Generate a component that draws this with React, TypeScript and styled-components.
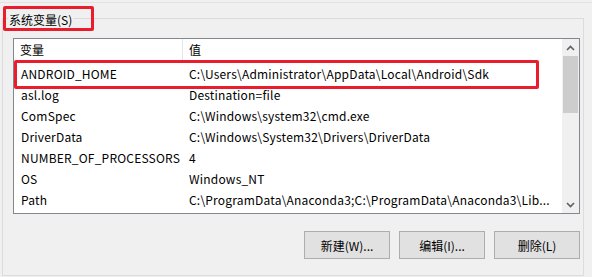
import React from "react";
import styled, { createGlobalStyle } from "styled-components";

const Global = createGlobalStyle`
  html, body { margin: 0; padding: 0; background: #f0f0f0; }
  body { font-family: "Noto Sans CJK SC", "Noto Sans", sans-serif; font-size: 12px; color: #000; }
`;

const Root = styled.div`
  width: 592px;
  height: 277px;
  box-sizing: border-box;
  padding-top: 2px;
  overflow: hidden;
`;

const TopLine = styled.div`
  border-top: 1px solid #e3e3e3;
  padding: 5px 8px 0 2px;
`;

const Group = styled.fieldset`
  position: relative;
  margin: 0;
  padding: 10px 3px 16px 10px;
  border: 1px solid #dcdcdc;
  min-width: 0;
  display: flex;
  flex-direction: column;
`;

const Legend = styled.legend`
  margin-left: -5px;
  padding: 0 1px;
  line-height: 20px;
  height: 20px;
  font-size: 12px;
  position: relative;
  top: 2px;
`;

const Mark = styled.div<{ $l: number; $t: number; $w: number; $h: number }>`
  position: absolute;
  left: ${(p) => p.$l}px;
  top: ${(p) => p.$t}px;
  width: ${(p) => p.$w}px;
  height: ${(p) => p.$h}px;
  box-sizing: border-box;
  border: 3px solid #ea1d2c;
  border-radius: 2px;
  pointer-events: none;
`;

const ListBox = styled.div`
  position: relative;
  height: 176px;
  box-sizing: border-box;
  border: 1px solid #828790;
  background: #fff;
  display: flex;
`;

const ListMain = styled.div`
  flex: 1;
  min-width: 0;
  display: flex;
  flex-direction: column;
  overflow: hidden;
`;

const Header = styled.div`
  display: flex;
  height: 21px;
  flex: none;
  margin-bottom: 3px;
`;

const HeadCell = styled.div<{ $w?: number; $sep?: boolean }>`
  ${(p) => (p.$w ? `width: ${p.$w}px; flex: none;` : "flex: 1;")}
  box-sizing: border-box;
  padding-left: 6px;
  line-height: 21px;
  border-right: ${(p) => (p.$sep ? "1px solid #e5e5e5" : "none")};
  white-space: nowrap;
`;

const Row = styled.div`
  display: flex;
  height: 21px;
  flex: none;
  line-height: 21px;
`;

const Cell = styled.div<{ $w?: number }>`
  ${(p) => (p.$w ? `width: ${p.$w}px; flex: none;` : "flex: 1; min-width: 0;")}
  box-sizing: border-box;
  padding-left: ${(p) => (p.$w ? 7 : 6)}px;
  white-space: nowrap;
  letter-spacing: 0.2px;
`;

const ScrollBar = styled.div`
  width: 17px;
  flex: none;
  background: #f0f0f0;
  display: flex;
  flex-direction: column;
  align-items: center;
`;

const Arrow = styled.div`
  height: 17px;
  width: 17px;
  flex: none;
  display: flex;
  align-items: center;
  justify-content: center;
`;

const Track = styled.div`
  flex: 1;
  width: 100%;
  display: flex;
  justify-content: center;
`;

const Thumb = styled.div`
  width: 15px;
  height: 57px;
  background: #cdcdcd;
`;

const Buttons = styled.div`
  display: flex;
  justify-content: flex-end;
  gap: 9px;
  margin-top: 17px;
`;

const Button = styled.div`
  width: 86px;
  height: 28px;
  box-sizing: border-box;
  background: #e1e1e1;
  border: 1px solid #adadad;
  display: flex;
  align-items: center;
  justify-content: center;
  font-size: 12px;
`;

const Chevron = ({ up }: { up?: boolean }) => (
  <svg width="9" height="6" viewBox="0 0 9 6">
    <path
      d={up ? "M1 5 L4.5 1.5 L8 5" : "M1 1 L4.5 4.5 L8 1"}
      fill="none"
      stroke="#606060"
      strokeWidth="1.6"
    />
  </svg>
);

const rows: [string, string][] = [
  ["ANDROID_HOME", "C:\\Users\\Administrator\\AppData\\Local\\Android\\Sdk"],
  ["asl.log", "Destination=file"],
  ["ComSpec", "C:\\Windows\\system32\\cmd.exe"],
  ["DriverData", "C:\\Windows\\System32\\Drivers\\DriverData"],
  ["NUMBER_OF_PROCESSORS", "4"],
  ["OS", "Windows_NT"],
  ["Path", "C:\\ProgramData\\Anaconda3;C:\\ProgramData\\Anaconda3\\Lib..."],
];

export default function App() {
  return (
    <Root>
      <Global />
      <TopLine>
        <Group>
          <Legend>系统变量(S)</Legend>
          <Mark $l={0} $t={-22} $w={91} $h={25} />
          <ListBox>
            <ListMain>
              <Header>
                <HeadCell $w={169} $sep>
                  变量
                </HeadCell>
                <HeadCell>值</HeadCell>
              </Header>
              {rows.map(([k, v]) => (
                <Row key={k}>
                  <Cell $w={169}>{k}</Cell>
                  <Cell>{v}</Cell>
                </Row>
              ))}
            </ListMain>
            <ScrollBar>
              <Arrow>
                <Chevron up />
              </Arrow>
              <Track>
                <Thumb />
              </Track>
              <Arrow>
                <Chevron />
              </Arrow>
            </ScrollBar>
            <Mark $l={0} $t={21} $w={525} $h={29} />
          </ListBox>
          <Buttons>
            <Button>新建(W)...</Button>
            <Button>编辑(I)...</Button>
            <Button>删除(L)</Button>
          </Buttons>
        </Group>
      </TopLine>
    </Root>
  );
}
